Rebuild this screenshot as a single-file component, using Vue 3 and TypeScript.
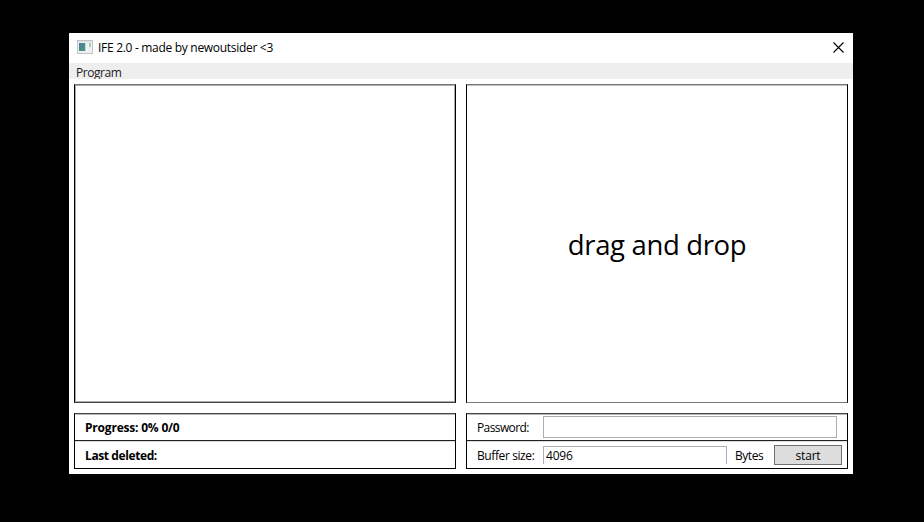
<script setup lang="ts">
import { ref } from 'vue'

const password = ref('')
const bufferSize = ref('4096')
const progress = ref({ percent: 0, done: 0, total: 0 })
const lastDeleted = ref('')
</script>

<template>
  <main class="desktop">
    <section class="window">
      <header class="titlebar">
        <svg class="app-icon" width="16" height="14" viewBox="0 0 16 14">
          <defs>
            <linearGradient id="pane" x1="0" y1="0" x2="1" y2="1">
              <stop offset="0" stop-color="#4a78a8" />
              <stop offset="1" stop-color="#4a9c74" />
            </linearGradient>
          </defs>
          <rect x="0" y="0" width="16" height="14" fill="#c3c6c9" />
          <rect x="1" y="1" width="14" height="1" fill="#d9dcdf" />
          <rect x="1" y="2" width="14" height="11" fill="#eef0f1" />
          <rect x="2" y="3" width="6" height="8" fill="url(#pane)" />
          <rect x="8" y="3" width="1" height="8" fill="#c9d6dc" />
          <rect x="12" y="3" width="2" height="4" fill="#a5cdb4" />
        </svg>
        <h1 class="title">IFE 2.0 - made by newoutsider &lt;3</h1>
        <button class="close" aria-label="Close">
          <svg width="11" height="11" viewBox="0 0 11 11">
            <path d="M.5.5 10.5 10.5M10.5.5.5 10.5" stroke="#000" stroke-width="1.1" />
          </svg>
        </button>
      </header>
      <nav class="menubar"><span class="menu-item">Program</span></nav>
      <div class="content">
        <div class="panel list"></div>
        <div class="panel drop"><span class="drop-text">drag and drop</span></div>
        <div class="panel info">
          <div class="row"><b class="text progress">Progress: {{ progress.percent }}% {{ progress.done }}/{{ progress.total }}</b></div>
          <div class="row"><b class="text deleted">Last deleted: {{ lastDeleted }}</b></div>
        </div>
        <div class="panel info">
          <div class="row">
            <label class="text label pw">Password:</label>
            <input v-model="password" class="field password" type="password" />
          </div>
          <div class="row">
            <label class="text label buf">Buffer size:</label>
            <input v-model="bufferSize" class="field buffer" />
            <span class="text bytes">Bytes</span>
            <button class="start">start</button>
          </div>
        </div>
      </div>
    </section>
  </main>
</template>

<style>
body { background: #000; }
</style>

<style scoped>
* { box-sizing: border-box; }
.desktop {
  height: 522px;
  padding: 33px 71px 0 69px;
  background: #000;
  color: #000;
  font: 12px/16px "Open Sans", "Noto Sans", sans-serif;
  white-space: nowrap;
}
.window { width: 784px; height: 441px; background: #fff; }
.titlebar { height: 30px; display: flex; align-items: center; padding: 0 9px 0 8px; }
.app-icon { display: block; margin-top: -2px; }
.title { margin: 0 auto 0 5px; font-size: 12px; font-weight: 400; letter-spacing: -0.3px; }
.close { display: flex; padding: 0; border: 0; background: none; margin-top: -2px; }
.menubar { height: 16px; padding: 2px 7px 0; background: #eee; color: #212121; overflow: hidden; }
.menu-item { display: block; letter-spacing: -0.45px; }
.content {
  display: grid;
  grid-template-columns: 382px 382px;
  grid-template-rows: 319px 56px;
  gap: 10px;
  padding: 5px;
}
.panel { border: 1px solid #000; }
.list { border-top-color: #777; border-bottom-color: #444; box-shadow: inset 0 1px #aaa, inset 1px 0 #aaa, inset -1px -1px #aaa; }
.drop {
  display: flex;
  align-items: center;
  justify-content: center;
  padding-top: 2px;
  border-top-color: #777;
  border-bottom-color: #777;
  box-shadow: inset 0 1px #c0c0c0;
}
.drop-text { font-size: 27.5px; line-height: 38px; letter-spacing: -0.35px; }
.info { border-top-color: #444; box-shadow: inset 0 1px #bbb; }
.row { display: flex; height: 26px; padding-left: 10px; align-items: center; }
.row + .row { border-top: 1px solid #222; height: 28px; box-shadow: inset 0 1px #ddd; }
.text { padding-top: 2px; }
.progress { letter-spacing: -0.2px; }
.deleted { letter-spacing: -0.4px; }
.label { width: 66px; }
.pw { letter-spacing: -0.6px; }
.buf { letter-spacing: -0.4px; }
.field {
  height: 22px;
  border: 1px solid #abadb3;
  border-radius: 0;
  padding: 0 2px;
  font: inherit;
  letter-spacing: -0.2px;
  outline: 0;
  background: #fff;
}
.password { width: 294px; }
.buffer { align-self: flex-start; width: 184px; height: 18px; margin-top: 5px; border-bottom: 0; }
.bytes { width: 39px; margin-left: 8px; letter-spacing: -0.45px; }
.start {
  align-self: flex-start;
  width: 68px;
  height: 20px;
  margin-top: 4px;
  padding: 1px 0 0;
  border: 1px solid #707070;
  background: #ddd;
  color: #000;
  font: inherit;
  letter-spacing: -0.2px;
}
</style>
